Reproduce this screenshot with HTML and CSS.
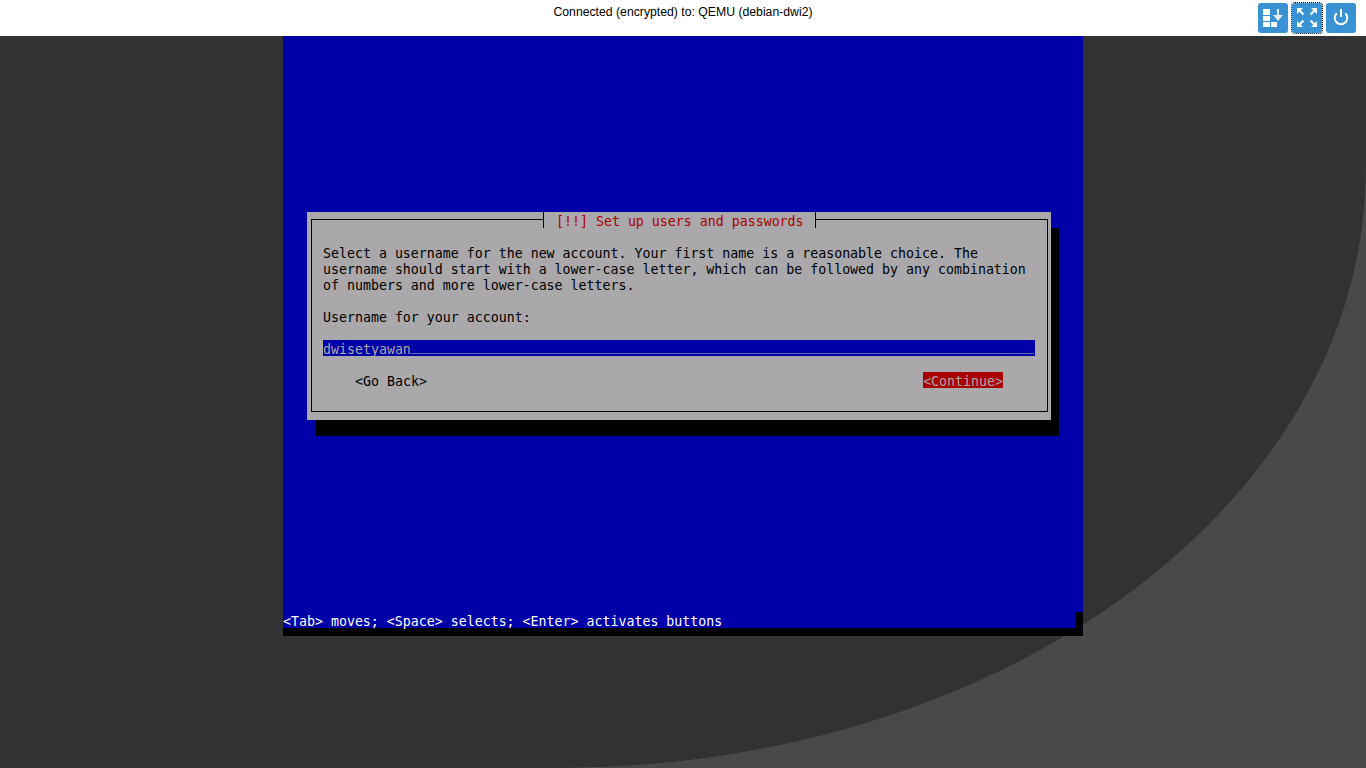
FILE: index.html
```html
<!DOCTYPE html>
<html lang="en">
<head>
<meta charset="utf-8">
<title>QEMU (debian-dwi2)</title>
<link rel="stylesheet" href="styles.css">
</head>
<body>
<header class="topbar">
  <div class="status-title">Connected (encrypted) to: QEMU (debian-dwi2)</div>
  <div class="toolbar">
    <button class="tool" type="button" aria-label="Send keys">
      <svg width="30" height="30" viewBox="0 0 30 30">
        <path class="fill" d="M5 6h7v6H5zM5 13h7v5H5zM5 19h7v5H5zM13 19h6v5h-6z"/>
        <path class="soft" d="M19 6h2v6h4l-5 6-5-6h4z"/>
      </svg>
    </button>
    <button class="tool tool-focus" type="button" aria-label="Fullscreen">
      <svg width="30" height="30" viewBox="0 0 30 30">
        <path class="fill" d="M5 5h6L8.750 7.250l3.500 3.500-1.500 1.500-3.500-3.500L5 11zM25 5v6l-2.250-2.250-3.500 3.500-1.500-1.500 3.500-3.500L19 5zM5 24v-6l2.250 2.250 3.500-3.500 1.500 1.500-3.500 3.500L11 24zM25 24h-6l2.250-2.250-3.500-3.500 1.500-1.500 3.500 3.500L25 18z"/>
      </svg>
    </button>
    <button class="tool" type="button" aria-label="Power">
      <svg width="30" height="30" viewBox="0 0 30 30">
        <path class="line" d="M10.800 10.200a6.300 6.300 0 1 0 8.400 0M15 6v8"/>
      </svg>
    </button>
  </div>
</header>
<main class="stage">
  <section class="screen">
    <div class="screen-body">
      <div class="dialog">
        <div class="frame">
          <h1 class="dialog-title">[!!] Set up users and passwords</h1>
          <p class="term prose">Select a username for the new account. Your first name is a reasonable choice. The
username should start with a lower-case letter, which can be followed by any combination
of numbers and more lower-case letters.</p>
          <p class="term prose gap">Username for your account:</p>
          <div class="term gap field">dwisetyawan<span class="field-fill">______________________________________________________________________________</span></div>
          <div class="term gap actions">
            <span>&lt;Go Back&gt;</span>
            <span class="action-active">&lt;Continue&gt;</span>
          </div>
        </div>
      </div>
    </div>
    <footer class="status-shadow">
      <div class="term status-line">&lt;Tab&gt; moves; &lt;Space&gt; selects; &lt;Enter&gt; activates buttons</div>
    </footer>
  </section>
</main>
</body>
</html>
```

FILE: styles.css
```css
* { box-sizing: border-box; }

html, body {
  margin: 0;
  height: 100%;
  overflow: hidden;
}

body {
  display: flex;
  flex-direction: column;
  width: 1366px;
  height: 768px;
  font-family: "Liberation Sans", Arial, sans-serif;
}

.topbar {
  display: grid;
  grid-template-columns: 1fr auto 1fr;
  flex: 0 0 36px;
  background: #fff;
}

.status-title {
  grid-column: 2;
  padding-top: 5px;
  font-size: 12.24px;
  line-height: 14px;
  color: #000;
  white-space: nowrap;
}

.toolbar {
  grid-column: 3;
  display: flex;
  justify-content: flex-end;
  gap: 4px;
  padding: 3px 10px 0 0;
}

.tool {
  width: 30px;
  height: 30px;
  padding: 0;
  border: 0;
  border-radius: 3px;
  background: #3892d4;
}

.tool svg { display: block; }

.tool-focus { outline: 1px dotted #000; }

.fill { fill: #fff; }
.soft { fill: #e4eef6; }
.line {
  fill: none;
  stroke: #fff;
  stroke-width: 2;
}

.stage {
  flex: 1;
  display: flex;
  justify-content: center;
  background:
    linear-gradient(#323232, #323232) left top / 560px 100% no-repeat,
    linear-gradient(#323232, #323232) left top / 100% 134px no-repeat,
    radial-gradient(ellipse 806px 598px at 560px 134px, #323232 99.9%, #494949 100%);
}

.screen {
  display: flex;
  flex-direction: column;
  width: 800px;
  height: 600px;
  background: #0000a8;
}

.screen-body {
  flex: 1;
  padding: 176px 0 0 24px;
}

.term {
  margin: 0;
  font-family: "DejaVu Sans Mono", "Liberation Mono", monospace;
  font-size: 13.288px;
  line-height: 20px;
  white-space: pre;
}

.prose {
  padding-top: 2px;
  margin-bottom: -2px;
  line-height: 16px;
}

.dialog {
  width: 744px;
  height: 208px;
  padding: 7px 3px 8px 4px;
  background: #aaa8aa;
  color: #000;
  box-shadow: 8px 16px 0 #000;
}

.frame {
  position: relative;
  height: 193px;
  padding: 24px 0 0 11px;
  border: 1px solid #000;
}

.dialog-title {
  position: absolute;
  top: -8px;
  left: 231px;
  width: 273px;
  height: 16px;
  margin: 0;
  padding-left: 12px;
  border: solid #000;
  border-width: 0 1px;
  background: #aaa8aa;
  color: #a80000;
  font-family: "DejaVu Sans Mono", "Liberation Mono", monospace;
  font-size: 13.288px;
  font-weight: 400;
  line-height: 20px;
  white-space: pre;
}

.gap { margin-top: 16px; }

.field {
  width: 712px;
  height: 16px;
  background: #0000a8;
  color: #aaa8aa;
}

.field-fill {
  line-height: 0;
  vertical-align: 4px;
}

.actions {
  display: flex;
  justify-content: space-between;
  width: 712px;
  height: 16px;
  padding: 0 32px;
}

.action-active {
  height: 16px;
  background: #a80000;
  color: #aaa8aa;
}

.status-shadow {
  flex: 0 0 24px;
  padding: 0 8px 8px 0;
  background: #000;
}

.status-line {
  height: 16px;
  background: #0000a8;
  color: #fff;
}
```
